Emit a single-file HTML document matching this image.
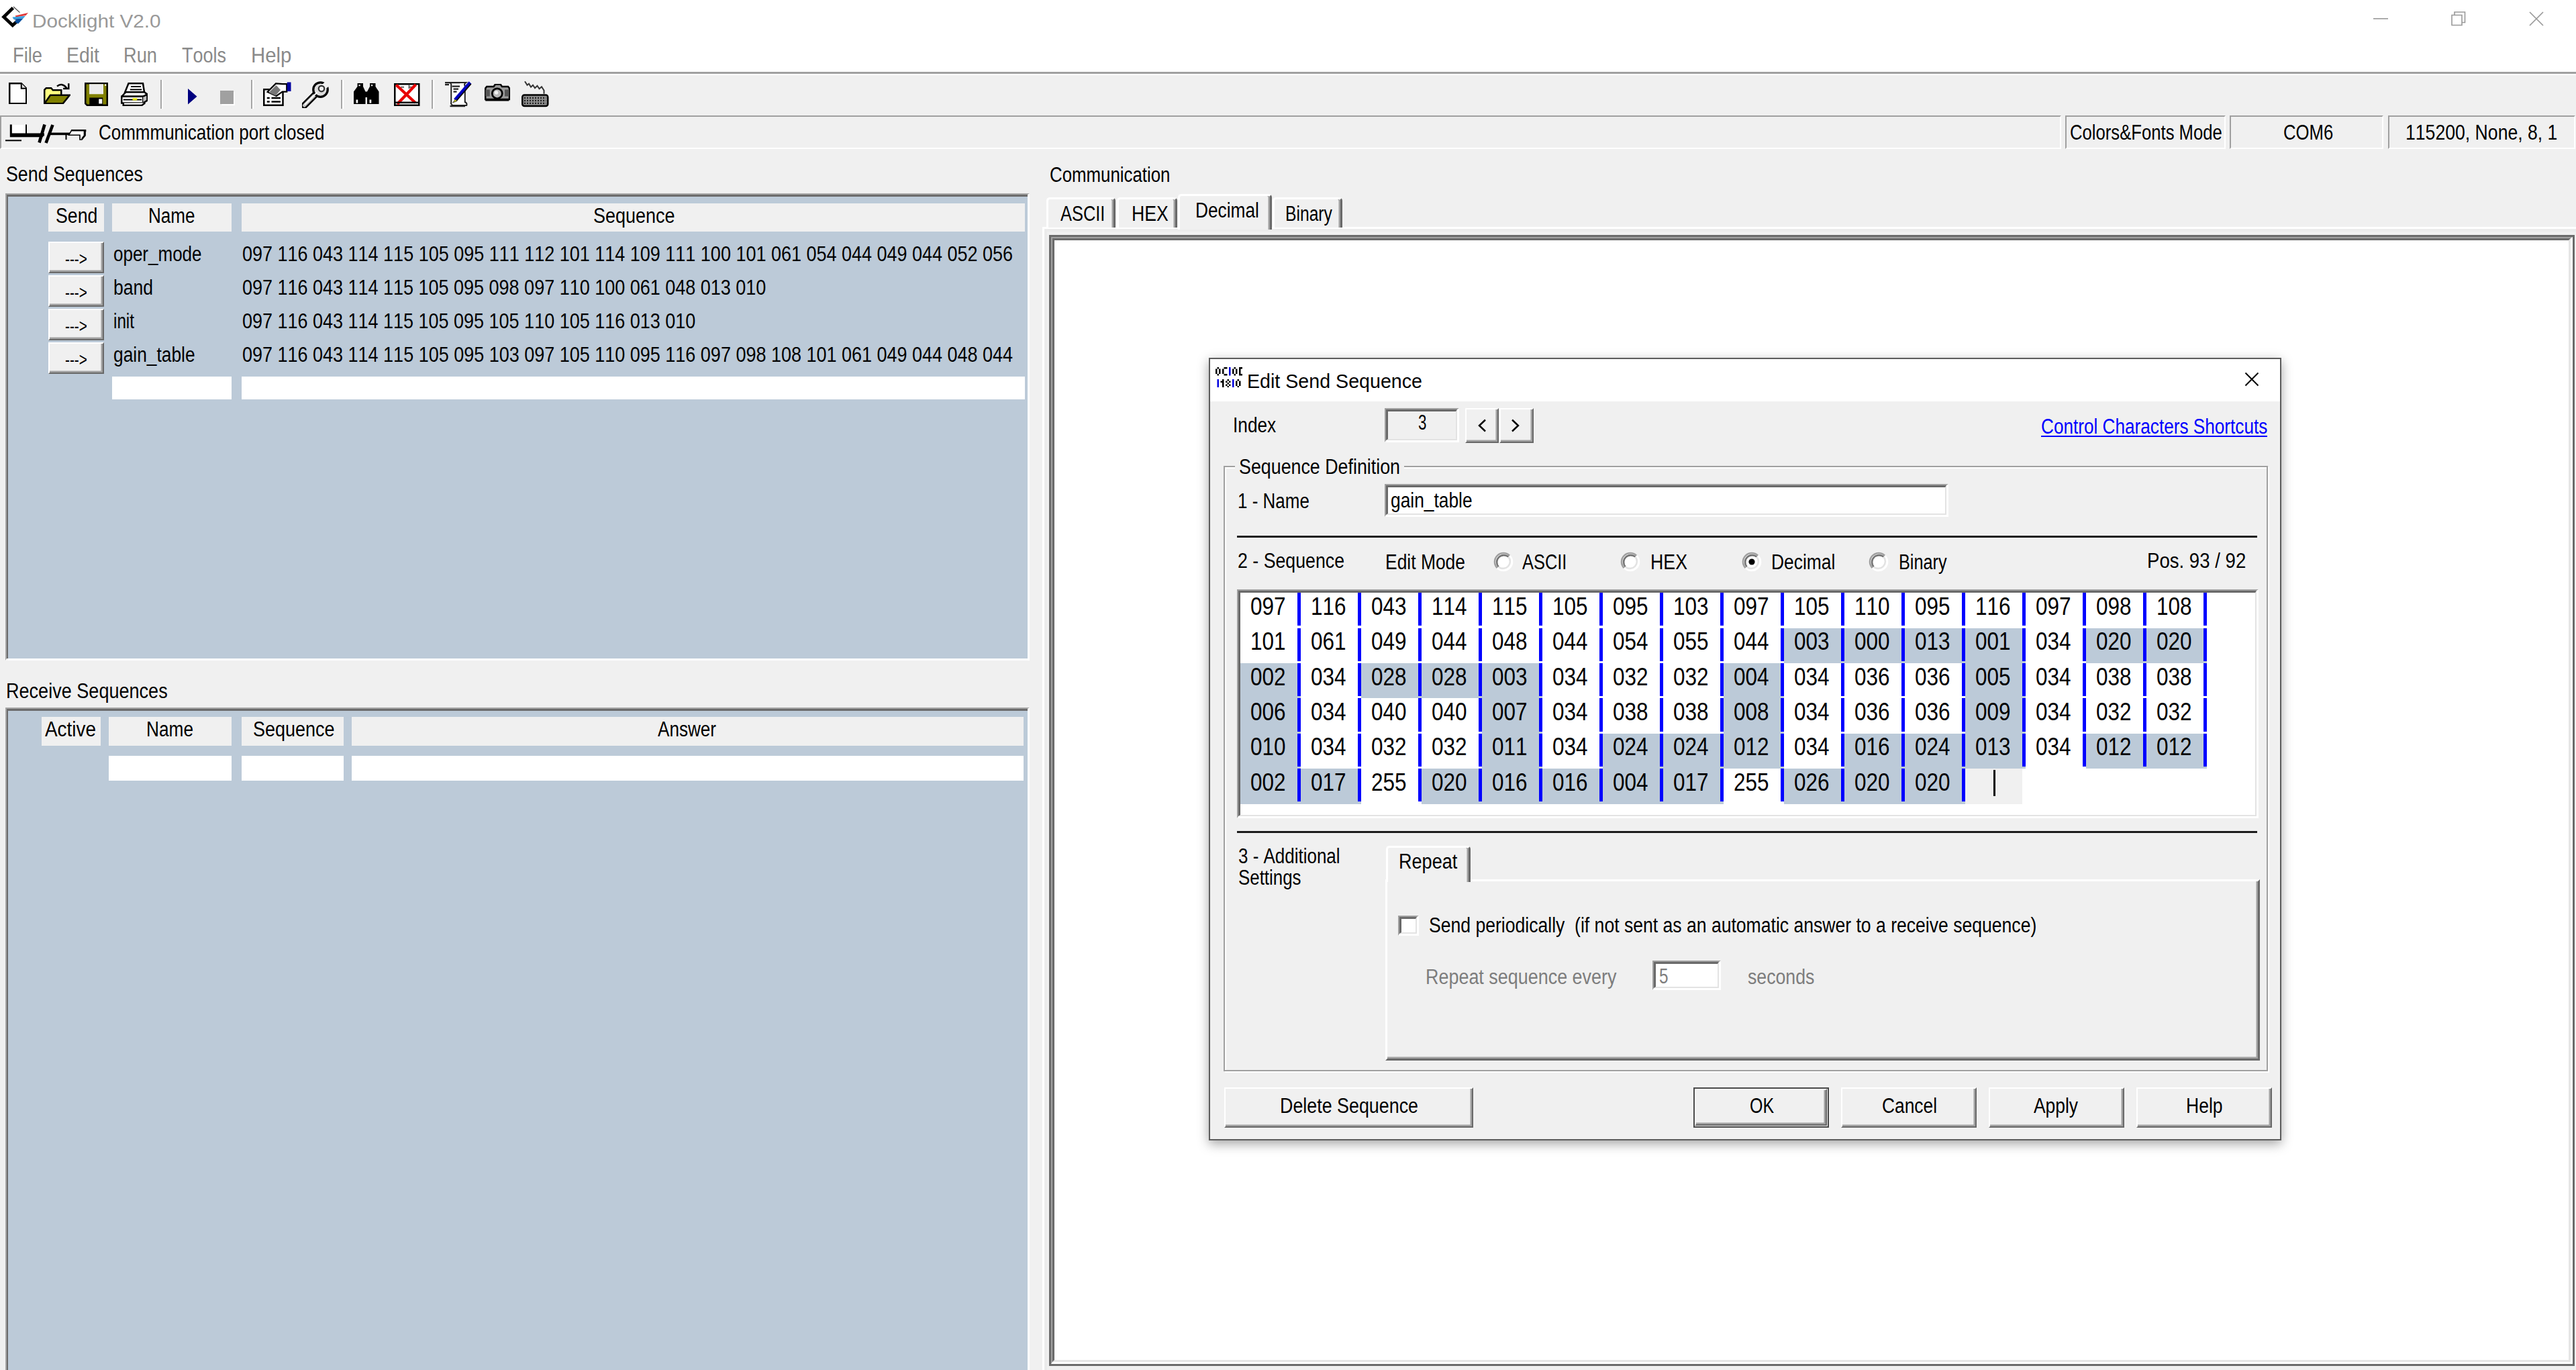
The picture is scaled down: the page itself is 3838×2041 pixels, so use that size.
<!DOCTYPE html>
<html><head><meta charset="utf-8"><title>Docklight V2.0</title>
<style>
html,body{margin:0;padding:0;}
body{width:3838px;height:2041px;overflow:hidden;background:#f0f0f0;position:relative;font-family:"Liberation Sans",sans-serif;}
div,span,svg{position:absolute;box-sizing:border-box;}
.t{white-space:pre;line-height:1;transform-origin:0 0;display:block;font-kerning:none;font-variant-ligatures:none;}
.sunk{border-style:solid;border-width:3px;border-color:#a0a0a0 #fff #fff #a0a0a0;}
.sunk2{border-style:solid;border-width:5px;border-color:#696969 #e3e3e3 #e3e3e3 #696969;box-shadow:-3px -3px 0 0 #a0a0a0, 3px 3px 0 0 #fff;}
.btn{background:#f0f0f0;border-style:solid;border-width:2.5px;border-color:#fff #696969 #696969 #fff;box-shadow:inset -2.5px -2.5px 0 0 #a0a0a0;}
</style></head><body>

<div style="left:0.0px;top:0.0px;width:3838.0px;height:107.0px;background:#fff;"></div>
<div style="left:0.0px;top:107.0px;width:3838.0px;height:3.0px;background:#a0a0a0;"></div>
<div style="left:0.0px;top:110.0px;width:3838.0px;height:2.0px;background:#fff;"></div>
<span class="t" style="left:47.5px;top:18.2px;font-size:27.5px;color:#999;transform:scale(1.0802,1.0000);">Docklight V2.0</span>
<span class="t" style="left:18.6px;top:67.3px;font-size:31.5px;color:#8a8a8a;transform:scale(0.8675,1.0000);">File</span>
<span class="t" style="left:98.6px;top:67.3px;font-size:31.5px;color:#8a8a8a;transform:scale(0.9016,1.0000);">Edit</span>
<span class="t" style="left:183.6px;top:67.3px;font-size:31.5px;color:#8a8a8a;transform:scale(0.8641,1.0000);">Run</span>
<span class="t" style="left:271.0px;top:67.3px;font-size:31.5px;color:#8a8a8a;transform:scale(0.8568,1.0000);">Tools</span>
<span class="t" style="left:373.7px;top:67.3px;font-size:31.5px;color:#8a8a8a;transform:scale(0.9313,1.0000);">Help</span>
<div style="left:238.5px;top:119.0px;width:2.0px;height:43.0px;background:#a6a6a6;"></div>
<div style="left:240.5px;top:119.0px;width:2.0px;height:43.0px;background:#fff;"></div>
<div style="left:373.5px;top:119.0px;width:2.0px;height:43.0px;background:#a6a6a6;"></div>
<div style="left:375.5px;top:119.0px;width:2.0px;height:43.0px;background:#fff;"></div>
<div style="left:507.5px;top:119.0px;width:2.0px;height:43.0px;background:#a6a6a6;"></div>
<div style="left:509.5px;top:119.0px;width:2.0px;height:43.0px;background:#fff;"></div>
<div style="left:642.5px;top:119.0px;width:2.0px;height:43.0px;background:#a6a6a6;"></div>
<div style="left:644.5px;top:119.0px;width:2.0px;height:43.0px;background:#fff;"></div>
<svg style="left:0.0px;top:5.0px;width:48px;height:40px" viewBox="0 0 48 40"><path d="M19.4 6.8 L5.6 20.2 L18.8 32.8 L25 27" stroke="#000" stroke-width="4.8" fill="none" stroke-linejoin="miter"/><path d="M20 5 L29.5 13.6" stroke="#444" stroke-width="1.2" fill="none"/><path d="M22.5 18.5 L42 14 L38.5 18 L24 20.5z" fill="#e03a3a"/><path d="M18.5 20.5 L38 18.8 L34.5 22.5 L20 23.5z" fill="#39a0e0"/><path d="M20 23.5 L34.5 22.5 L27 30.5 L22 27.5 L24 25z" fill="#0a4f9e"/></svg>
<svg style="left:3536.0px;top:27.0px;width:22px;height:2px" viewBox="0 0 22 2"><rect width="22" height="1.6" fill="#999"/></svg>
<svg style="left:3652.0px;top:17.0px;width:22px;height:22px" viewBox="0 0 22 22"><path d="M1 5.5h15v15h-15z M5 5.5v-4.5h15.5v15.5h-4.5" stroke="#999" stroke-width="1.6" fill="none"/></svg>
<svg style="left:3768.0px;top:17.0px;width:22px;height:22px" viewBox="0 0 22 22"><path d="M1 1L21 21M21 1L1 21" stroke="#999" stroke-width="1.7" fill="none"/></svg>
<svg style="left:12.5px;top:122.9px;width:27.5px;height:32.5px" viewBox="0 0 11 13"><path d="M.5 .5h7l3 3v9h-10z" fill="#fff" stroke="#000"/><path d="M7.5 .5v3h3" fill="#ddd" stroke="#000" stroke-width=".8"/></svg>
<svg style="left:65.0px;top:122.9px;width:40px;height:32.5px" viewBox="0 0 16 13"><path d="M.5 12.5v-8.2l1-1h3l1 1.2h5v3" fill="#ffff80" stroke="#000"/><path d="M.5 12.5l3.5-5h11.5l-4 5z" fill="#808000" stroke="#000"/><path d="M8 2.2q3.2-2.4 5.8 1.2" stroke="#000" fill="none" stroke-width="1"/><path d="M11.6 3.6h3.3v-3.1" stroke="#000" fill="none" stroke-width="1"/></svg>
<svg style="left:125.5px;top:123.4px;width:35px;height:35px" viewBox="0 0 14 14"><path d="M.5 .5h13v13h-12l-1-1z" fill="#808000" stroke="#000"/><rect x="2.8" y=".9" width="8.4" height="6" fill="#ebebeb"/><rect x="2.9" y="9" width="8" height="4.4" fill="#000"/><rect x="8.5" y="9.8" width="2" height="2.8" fill="#fff"/><rect x="12" y="1" width=".9" height=".9" fill="#fff"/></svg>
<svg style="left:180.3px;top:122.9px;width:40px;height:35px" viewBox="0 0 16 14"><path d="M4.6 .5h8.6l.8 5.2h-11.5z" fill="#fff" stroke="#000"/><path d="M6 2.4h6M5.5 4.2h7" stroke="#000" stroke-width=".8"/><path d="M.5 8.3l2.5-2.6h11l1.8 1.3-2.5 1.3z" fill="#fff" stroke="#000"/><path d="M.5 8.3h12.8v3.9h-12.8z" fill="#fff" stroke="#000"/><path d="M13.3 8.3l2.5-1.3v3.6l-2.5 1.6" fill="#c0c0c0" stroke="#000"/><path d="M1.5 12.2v1.4h11l2-1.5" fill="#fff" stroke="#000"/><path d="M1.5 10.2h11" stroke="#000" stroke-width=".8"/><rect x="7" y="9.3" width="2.7" height="1.3" fill="#e0e000"/></svg>
<svg style="left:280.0px;top:132.4px;width:13.5px;height:23.5px" viewBox="0 0 5.4 9.4"><path d="M0 0L5.4 4.7L0 9.4z" fill="#000080"/></svg>
<svg style="left:327.5px;top:135.4px;width:22.5px;height:22px" viewBox="0 0 9 8.8"><rect x="1" y="1" width="8" height="8" fill="#fff"/><rect width="8" height="8" fill="#a0a0a0"/></svg>
<svg style="left:392.0px;top:120.2px;width:42.5px;height:40px" viewBox="0 0 17 16"><rect x=".5" y="5.3" width="11.3" height="9.4" fill="#fff" stroke="#000"/><path d="M2.3 10.4h1.6M5 10.4h5.4M2.3 12.6h1.6M5 12.6h5.4" stroke="#000" stroke-width="1"/><path d="M2.6 6.8l5-5 4 .2 2.5 0v4.6l-2.6 0-3.6 2.6z" fill="#fff" stroke="#000" stroke-width=".9"/><path d="M3.4 7.2l4.4-4.4 2.6 2.8-3 3.4z" fill="#777"/><rect x="14.3" y="1" width="2.3" height="5.4" fill="#0000a0"/></svg>
<svg style="left:449.6px;top:120.6px;width:40px;height:40px" viewBox="0 0 16 16"><path d="M1.4 14.4l7.8-7.8" stroke="#000" stroke-width="4" fill="none" stroke-linecap="round"/><path d="M1.4 14.4l7.8-7.8" stroke="#c4c4c4" stroke-width="2" fill="none" stroke-linecap="round"/><circle cx="11" cy="5" r="4.3" fill="#dcdcdc" stroke="#000" stroke-width="1.3"/><path d="M1.6 14l7.4-7.4" stroke="#fff" stroke-width=".8"/><path d="M11.4 4.6l4.6-3.8" stroke="#f0f0f0" stroke-width="3.4"/><circle cx="11.6" cy="4.4" r="1.7" fill="#f0f0f0" stroke="#333" stroke-width=".9"/></svg>
<svg style="left:527.3px;top:123.6px;width:37.5px;height:31.5px" viewBox="0 0 15 12.6"><path d="M2.2 0h3.4v2l1.4 3v7.5h-7v-7.5l2.2-3z M9.6 0h3.4v2l2 3v7.5h-7v-7.5l1.6-3z M6.5 5h2v3.4h-2z" fill="#000"/><rect x="1.4" y="9.8" width="1.1" height="2" fill="#fff"/><rect x="9.4" y="9.8" width="1.1" height="2" fill="#fff"/><rect x="3" y=".8" width=".9" height=".9" fill="#ddd"/><rect x="10.4" y=".8" width=".9" height=".9" fill="#ddd"/></svg>
<svg style="left:587.0px;top:123.6px;width:38.5px;height:34px" viewBox="0 0 15.4 13.6"><rect x=".5" y=".5" width="14.4" height="12.6" fill="#fff" stroke="#000"/><path d="M4 2.3h2M9 .8v2.4M9 2.3h3" stroke="#666" stroke-width=".8"/><path d="M1.3 1l11.4 10.6M13 .8l-11 11.6" stroke="#e80000" stroke-width="1.7" fill="none"/><path d="M.5 11.5h14.4" stroke="#000"/></svg>
<svg style="left:662.0px;top:120.0px;width:42.5px;height:40px" viewBox="0 0 17 16"><path d="M3.5 1.2h9.4q-1.4 .9-.6 2v9.6q1.4 .6 1 2h-8.2q-1.4-.6-1-2v-10.6z" fill="#fff" stroke="#222" stroke-width=".8"/><path d="M.4 1.2h9M.4 2.4h2.4M4.6 3.4h4.6M5.4 5h3M5.4 6.6h2M3.4 15.2h9" stroke="#222" stroke-width=".9"/><path d="M15.4 1.2l-9 10.4" stroke="#0000c0" stroke-width="2" /><path d="M15.9 2l-8.6 10" stroke="#000" stroke-width=".7"/><path d="M6.6 11.2l-1.6 2 2.6-1z" fill="#d8d800" stroke="#444" stroke-width=".4"/></svg>
<svg style="left:722.0px;top:125.4px;width:37.5px;height:27.5px" viewBox="0 0 15 11"><path d="M5.4 1.6l1-1.4h3l1 1.4h3.6l.8 1v6.6h-14.3v-6.6l.8-1z" fill="#9a9a9a" stroke="#000" stroke-width="1"/><rect x=".5" y="3.4" width="2.6" height="4" fill="#555"/><rect x="12" y="3.4" width="2.6" height="4" fill="#555"/><circle cx="7.5" cy="5.7" r="3" fill="#b8b8b8" stroke="#000" stroke-width="1.1"/><circle cx="7" cy="5.2" r="1.1" fill="#f2f2f2"/><path d="M.5 9.6h14" stroke="#000" stroke-width="1.2"/></svg>
<svg style="left:777.3px;top:120.0px;width:42.5px;height:40px" viewBox="0 0 17 16"><path d="M2 .5l1.4 2.2 1-.8 1.2 2 1.2-1.2 1.2 1.8 1.4-1.4 1.2 1.8 1.4-1.2 1.4 2.2v2" stroke="#333" stroke-width=".8" fill="none"/><rect x=".5" y="8.6" width="15.2" height="6.6" rx="1.2" fill="#8c8c8c" stroke="#000" stroke-width="1"/><path d="M1.6 10.3h13M1.6 11.9h13M1.6 13.5h13" stroke="#222" stroke-width=".9" stroke-dasharray=".8 .8"/></svg>
<div style="left:0.0px;top:172.3px;width:3071.0px;height:49.7px;border-style:solid;border-width:2.5px;border-color:#a0a0a0 #fff #fff #a0a0a0;"></div>
<div style="left:3077.0px;top:172.3px;width:239.0px;height:49.7px;border-style:solid;border-width:2.5px;border-color:#a0a0a0 #fff #fff #a0a0a0;"></div>
<div style="left:3322.0px;top:172.3px;width:229.0px;height:49.7px;border-style:solid;border-width:2.5px;border-color:#a0a0a0 #fff #fff #a0a0a0;"></div>
<div style="left:3558.0px;top:172.3px;width:279.0px;height:49.7px;border-style:solid;border-width:2.5px;border-color:#a0a0a0 #fff #fff #a0a0a0;"></div>
<span class="t" style="left:146.6px;top:182.3px;font-size:31px;color:#000;transform:scale(0.8380,1.0000);">Commmunication port closed</span>
<span class="t" style="left:3084.0px;top:182.3px;font-size:31px;color:#000;transform:scale(0.8280,1.0000);">Colors&amp;Fonts Mode</span>
<span class="t" style="left:3401.8px;top:182.3px;font-size:31px;color:#000;transform:scale(0.8288,1.0000);">COM6</span>
<span class="t" style="left:3584.0px;top:182.3px;font-size:31px;color:#000;transform:scale(0.8586,1.0000);">115200, None, 8, 1</span>
<svg style="left:5.0px;top:180.0px;width:130px;height:36px" viewBox="0 0 130 36"><rect x="12" y="6" width="21" height="14" fill="#fff"/><path d="M11.3 5.4v17.4h48" stroke="#000" stroke-width="3" fill="none"/><path d="M34 5.4v16" stroke="#000" stroke-width="2"/><path d="M11 20.5h50" stroke="#000" stroke-width="4.2"/><path d="M3 29.3h24" stroke="#000" stroke-width="2"/><path d="M61.5 5.5l-8 27" stroke="#000" stroke-width="4.6"/><path d="M73.5 6l-10 27" stroke="#000" stroke-width="4.6"/><path d="M70 19.4h30" stroke="#000" stroke-width="3.6"/><path d="M93.5 20v8" stroke="#000" stroke-width="2"/><path d="M97.5 21.3l4-7h20.5v7.5l-5 6.2h-3v-6.7z" fill="#fff" stroke="#000" stroke-width="1.6"/><path d="M101 14.3h21v2" stroke="#000" stroke-width="2.6" fill="none"/><path d="M121 14v8l-4 5" stroke="#000" stroke-width="2.6" fill="none"/></svg>
<span class="t" style="left:9.0px;top:244.4px;font-size:31px;color:#000;transform:scale(0.8639,1.0000);">Send Sequences</span>
<div style="left:8.0px;top:288.3px;width:1526.0px;height:695.7px;border-style:solid;border-width:2px 3px 3px 2px;border-color:#a6a6a6 #fff #fff #a6a6a6;"></div>
<div style="left:10.0px;top:290.3px;width:1521.0px;height:690.7px;background:#bccad8;border-style:solid;border-width:3px 0 0 2px;border-color:#6b6b6b;"></div>
<div style="left:72.0px;top:303.0px;width:82.7px;height:42.0px;background:#f0f0f0;"></div>
<div style="left:167.0px;top:303.0px;width:177.7px;height:42.0px;background:#f0f0f0;"></div>
<div style="left:359.6px;top:303.0px;width:1167.4px;height:42.0px;background:#f0f0f0;"></div>
<span class="t" style="left:82.6px;top:306.3px;font-size:31px;color:#000;transform:scale(0.8623,1.0000);">Send</span>
<span class="t" style="left:220.5px;top:306.3px;font-size:31px;color:#000;transform:scale(0.8408,1.0000);">Name</span>
<span class="t" style="left:884.0px;top:306.3px;font-size:31px;color:#000;transform:scale(0.8704,1.0000);">Sequence</span>
<div class="btn" style="left:72.0px;top:360.0px;width:83.0px;height:46.5px;"></div>
<span class="t" style="left:97.0px;top:372.3px;font-size:28px;color:#000;transform:scale(0.7440,1.0000);">---&gt;</span>
<span class="t" style="left:169.0px;top:362.5px;font-size:31px;color:#000;transform:scale(0.8386,1.0000);">oper_mode</span>
<span class="t" style="left:361.0px;top:362.5px;font-size:31px;color:#000;transform:scale(0.8706,1.0000);">097 116 043 114 115 105 095 111 112 101 114 109 111 100 101 061 054 044 049 044 052 056</span>
<div class="btn" style="left:72.0px;top:410.0px;width:83.0px;height:46.5px;"></div>
<span class="t" style="left:97.0px;top:422.3px;font-size:28px;color:#000;transform:scale(0.7440,1.0000);">---&gt;</span>
<span class="t" style="left:169.0px;top:412.5px;font-size:31px;color:#000;transform:scale(0.8560,1.0000);">band</span>
<span class="t" style="left:361.0px;top:412.5px;font-size:31px;color:#000;transform:scale(0.8704,1.0000);">097 116 043 114 115 105 095 098 097 110 100 061 048 013 010</span>
<div class="btn" style="left:72.0px;top:460.0px;width:83.0px;height:46.5px;"></div>
<span class="t" style="left:97.0px;top:472.3px;font-size:28px;color:#000;transform:scale(0.7440,1.0000);">---&gt;</span>
<span class="t" style="left:169.0px;top:462.5px;font-size:31px;color:#000;transform:scale(0.7809,1.0000);">init</span>
<span class="t" style="left:361.0px;top:462.5px;font-size:31px;color:#000;transform:scale(0.8704,1.0000);">097 116 043 114 115 105 095 105 110 105 116 013 010</span>
<div class="btn" style="left:72.0px;top:510.0px;width:83.0px;height:46.5px;"></div>
<span class="t" style="left:97.0px;top:522.3px;font-size:28px;color:#000;transform:scale(0.7440,1.0000);">---&gt;</span>
<span class="t" style="left:169.0px;top:512.5px;font-size:31px;color:#000;transform:scale(0.8494,1.0000);">gain_table</span>
<span class="t" style="left:361.0px;top:512.5px;font-size:31px;color:#000;transform:scale(0.8706,1.0000);">097 116 043 114 115 105 095 103 097 105 110 095 116 097 098 108 101 061 049 044 048 044</span>
<div style="left:167.0px;top:561.0px;width:177.7px;height:34.0px;background:#fff;"></div>
<div style="left:359.6px;top:561.0px;width:1167.4px;height:34.0px;background:#fff;"></div>
<span class="t" style="left:9.3px;top:1013.5px;font-size:31px;color:#000;transform:scale(0.8729,1.0000);">Receive Sequences</span>
<div style="left:8.0px;top:1053.5px;width:1526.0px;height:1006.5px;border-style:solid;border-width:2px 3px 3px 2px;border-color:#a6a6a6 #fff #fff #a6a6a6;"></div>
<div style="left:10.0px;top:1055.5px;width:1521.0px;height:1001.5px;background:#bccad8;border-style:solid;border-width:3px 0 0 2px;border-color:#6b6b6b;"></div>
<div style="left:62.0px;top:1068.0px;width:88.0px;height:42.5px;background:#f0f0f0;"></div>
<div style="left:162.0px;top:1068.0px;width:182.7px;height:42.5px;background:#f0f0f0;"></div>
<div style="left:359.6px;top:1068.0px;width:152.8px;height:42.5px;background:#f0f0f0;"></div>
<div style="left:524.0px;top:1068.0px;width:1001.0px;height:42.5px;background:#f0f0f0;"></div>
<span class="t" style="left:67.0px;top:1070.8px;font-size:31px;color:#000;transform:scale(0.9007,1.0000);">Active</span>
<span class="t" style="left:218.0px;top:1070.8px;font-size:31px;color:#000;transform:scale(0.8469,1.0000);">Name</span>
<span class="t" style="left:376.5px;top:1070.8px;font-size:31px;color:#000;transform:scale(0.8704,1.0000);">Sequence</span>
<span class="t" style="left:980.0px;top:1070.8px;font-size:31px;color:#000;transform:scale(0.8411,1.0000);">Answer</span>
<div style="left:162.0px;top:1126.0px;width:182.7px;height:37.0px;background:#fff;"></div>
<div style="left:359.6px;top:1126.0px;width:152.8px;height:37.0px;background:#fff;"></div>
<div style="left:524.0px;top:1126.0px;width:1001.0px;height:37.0px;background:#fff;"></div>
<span class="t" style="left:1563.6px;top:244.5px;font-size:31px;color:#000;transform:scale(0.8331,1.0000);">Communication</span>
<div style="left:1553.0px;top:338.0px;width:2289.0px;height:1712.0px;border-style:solid;border-width:3px 0 0 3px;border-color:#fff;"></div>
<div style="left:1556.0px;top:341.0px;width:4.0px;height:1700.0px;background:#ebebeb;"></div>
<div style="left:1556.0px;top:341.0px;width:2282.0px;height:4.0px;background:#ebebeb;"></div>
<div style="left:1562.5px;top:350.4px;width:2273.0px;height:1684.8px;border:3px solid #6b6b6b;"></div>
<div style="left:1565.5px;top:353.4px;width:2267.0px;height:1678.8px;border-style:solid;border-width:2px 3px 3px 2px;border-color:#a0a0a0 #fff #fff #a0a0a0;"></div>
<div style="left:1567.5px;top:355.4px;width:2262.0px;height:1673.8px;background:#fff;border-style:solid;border-width:3px;border-color:#6b6b6b #e6e6e6 #e6e6e6 #6b6b6b;"></div>
<div style="left:1558.5px;top:293.5px;width:103.9px;height:45.5px;background:#f0f0f0;border-style:solid;border-width:3px 3px 0 3px;border-color:#fff #696969 #fff #fff;border-radius:5px 5px 0 0;box-shadow:inset -2.5px 0 0 0 #a0a0a0;"></div>
<div style="left:1664.0px;top:293.5px;width:90.0px;height:45.5px;background:#f0f0f0;border-style:solid;border-width:3px 3px 0 3px;border-color:#fff #696969 #fff #fff;border-radius:5px 5px 0 0;box-shadow:inset -2.5px 0 0 0 #a0a0a0;"></div>
<div style="left:1896.0px;top:293.5px;width:104.0px;height:45.5px;background:#f0f0f0;border-style:solid;border-width:3px 3px 0 3px;border-color:#fff #696969 #fff #fff;border-radius:5px 5px 0 0;box-shadow:inset -2.5px 0 0 0 #a0a0a0;"></div>
<div style="left:1755.0px;top:288.5px;width:140.0px;height:53.5px;background:#f0f0f0;border-style:solid;border-width:3px 3px 0 3px;border-color:#fff #696969 #fff #fff;border-radius:5px 5px 0 0;box-shadow:inset -2.5px 0 0 0 #a0a0a0;"></div>
<span class="t" style="left:1579.5px;top:303.1px;font-size:31px;color:#000;transform:scale(0.8206,1.0000);">ASCII</span>
<span class="t" style="left:1686.0px;top:303.1px;font-size:31px;color:#000;transform:scale(0.8590,1.0000);">HEX</span>
<span class="t" style="left:1781.0px;top:297.8px;font-size:31px;color:#000;transform:scale(0.8472,1.0000);">Decimal</span>
<span class="t" style="left:1914.6px;top:303.1px;font-size:31px;color:#000;transform:scale(0.7955,1.0000);">Binary</span>
<div style="left:1801.0px;top:533.0px;width:1598.0px;height:1166.0px;background:#f0f0f0;border:2px solid #5c5c5c;box-shadow:0 5px 16px 0 rgba(0,0,0,0.36);"></div>
<div style="left:1803.0px;top:535.0px;width:1594.0px;height:62.5px;background:#fff;"></div>
<span class="t" style="left:1857.6px;top:553.1px;font-size:30px;color:#000;transform:scale(0.9539,1.0000);">Edit Send Sequence</span>
<svg style="left:3343px;top:553px;width:24px;height:24px" viewBox="0 0 24 24"><path d="M2.5 2.5 L21.5 21.5 M21.5 2.5 L2.5 21.5" stroke="#000" stroke-width="2" fill="none"/></svg>
<svg style="left:1811.0px;top:547.2px;width:40px;height:12.5px" viewBox="0 0 16 5"><path d="M1 0h1v1h-1zM5 0h2v1h-2zM11 0h1v1h-1zM14 0h2v1h-2zM0 1h1v1h-1zM2 1h1v1h-1zM4 1h1v1h-1zM10 1h1v1h-1zM12 1h1v1h-1zM14 1h1v1h-1zM0 2h1v1h-1zM2 2h1v1h-1zM4 2h1v1h-1zM10 2h1v1h-1zM12 2h1v1h-1zM14 2h1v1h-1zM0 3h1v1h-1zM2 3h1v1h-1zM4 3h1v1h-1zM10 3h1v1h-1zM12 3h1v1h-1zM14 3h1v1h-1zM1 4h1v1h-1zM5 4h2v1h-2zM11 4h1v1h-1zM14 4h2v1h-2z" fill="#000"/><path d="M8 0h1v1h-1zM8 1h1v1h-1zM8 2h1v1h-1zM8 3h1v1h-1zM8 4h1v1h-1z" fill="#0000e0"/></svg>
<svg style="left:1811.0px;top:564.8px;width:40px;height:12.5px" viewBox="0 0 16 5"><path d="M4 0h1v1h-1zM7 0h1v1h-1zM13 0h1v1h-1zM3 1h2v1h-2zM6 1h1v1h-1zM8 1h1v1h-1zM12 1h1v1h-1zM14 1h1v1h-1zM4 2h1v1h-1zM7 2h1v1h-1zM12 2h1v1h-1zM14 2h1v1h-1zM4 3h1v1h-1zM6 3h1v1h-1zM8 3h1v1h-1zM12 3h1v1h-1zM14 3h1v1h-1zM4 4h1v1h-1zM7 4h1v1h-1zM13 4h1v1h-1z" fill="#000"/><path d="M1 0h1v1h-1zM10 0h1v1h-1zM1 1h1v1h-1zM10 1h1v1h-1zM1 2h1v1h-1zM10 2h1v1h-1zM1 3h1v1h-1zM10 3h1v1h-1zM1 4h1v1h-1zM10 4h1v1h-1z" fill="#0000e0"/></svg>
<span class="t" style="left:1836.8px;top:617.5px;font-size:31px;color:#000;transform:scale(0.8466,1.0000);">Index</span>
<div class="btn" style="left:2183.0px;top:608.2px;width:50.0px;height:51.8px;"></div>
<div class="btn" style="left:2233.5px;top:608.2px;width:51.8px;height:51.8px;"></div>
<svg style="left:2201px;top:623px;width:14px;height:22px" viewBox="0 0 14 22"><path d="M12 2.5 L3 11 L12 19.5" stroke="#000" stroke-width="2.5" fill="none"/></svg>
<svg style="left:2250.5px;top:623px;width:14px;height:22px" viewBox="0 0 14 22"><path d="M2 2.5 L11 11 L2 19.5" stroke="#000" stroke-width="2.5" fill="none"/></svg>
<span class="t" style="left:3040.7px;top:619.7px;font-size:31px;color:#0000ff;transform:scale(0.8438,1.0000);">Control Characters Shortcuts</span>
<div style="left:3040.7px;top:648.5px;width:337.3px;height:2.5px;background:#0000ff;"></div>
<div style="left:1825.0px;top:695.5px;width:1555.5px;height:902.5px;border:2.5px solid #fff;"></div>
<div style="left:1823.0px;top:693.5px;width:1555.5px;height:902.5px;border:2.5px solid #a0a0a0;"></div>
<div style="left:1840.0px;top:680.0px;width:252.0px;height:32.0px;background:#f0f0f0;"></div>
<span class="t" style="left:1846.0px;top:679.6px;font-size:31px;color:#000;transform:scale(0.8650,1.0000);">Sequence Definition</span>
<span class="t" style="left:1844.0px;top:730.8px;font-size:31px;color:#000;transform:scale(0.8380,1.0000);">1 - Name</span>
<div style="left:2063.4px;top:721.4px;width:839.4px;height:48.9px;border-style:solid;border-width:2px 3px 3px 2px;border-color:#a0a0a0 #fff #fff #a0a0a0;"></div>
<div style="left:2065.4px;top:723.4px;width:834.4px;height:43.9px;background:#fff;border-style:solid;border-width:3px 2px 2px 3px;border-color:#696969 #e3e3e3 #e3e3e3 #696969;"></div>
<div style="left:2063.4px;top:608.2px;width:110.2px;height:51.1px;border-style:solid;border-width:2px 3px 3px 2px;border-color:#a0a0a0 #fff #fff #a0a0a0;"></div>
<div style="left:2065.4px;top:610.2px;width:105.2px;height:46.1px;background:#f0f0f0;border-style:solid;border-width:3px 2px 2px 3px;border-color:#696969 #e3e3e3 #e3e3e3 #696969;"></div>
<span class="t" style="left:2113.2px;top:614.4px;font-size:31px;color:#000;transform:scale(0.7207,1.0000);">3</span>
<span class="t" style="left:2072.0px;top:729.8px;font-size:31px;color:#000;transform:scale(0.8494,1.0000);">gain_table</span>
<div style="left:1843.0px;top:798.0px;width:1520.0px;height:3.0px;background:#1c1c1c;"></div>
<span class="t" style="left:1844.0px;top:819.8px;font-size:31px;color:#000;transform:scale(0.8624,1.0000);">2 - Sequence</span>
<span class="t" style="left:2064.0px;top:822.4px;font-size:31px;color:#000;transform:scale(0.8528,1.0000);">Edit Mode</span>
<svg style="left:2223.6px;top:821.4px;width:32px;height:32px" viewBox="0 0 32 32"><circle cx="16" cy="16" r="12" fill="#fff"/><path d="M6.8 25.2 A13 13 0 0 1 25.2 6.8" stroke="#a0a0a0" stroke-width="2.6" fill="none"/><path d="M8.6 23.4 A10.5 10.5 0 0 1 23.4 8.6" stroke="#747474" stroke-width="2.6" fill="none"/><path d="M25.2 6.8 A13 13 0 0 1 6.8 25.2" stroke="#fff" stroke-width="2.6" fill="none"/><path d="M23.4 8.6 A10.5 10.5 0 0 1 8.6 23.4" stroke="#e3e3e3" stroke-width="2.6" fill="none"/></svg>
<svg style="left:2413px;top:821.4px;width:32px;height:32px" viewBox="0 0 32 32"><circle cx="16" cy="16" r="12" fill="#fff"/><path d="M6.8 25.2 A13 13 0 0 1 25.2 6.8" stroke="#a0a0a0" stroke-width="2.6" fill="none"/><path d="M8.6 23.4 A10.5 10.5 0 0 1 23.4 8.6" stroke="#747474" stroke-width="2.6" fill="none"/><path d="M25.2 6.8 A13 13 0 0 1 6.8 25.2" stroke="#fff" stroke-width="2.6" fill="none"/><path d="M23.4 8.6 A10.5 10.5 0 0 1 8.6 23.4" stroke="#e3e3e3" stroke-width="2.6" fill="none"/></svg>
<svg style="left:2594px;top:821.4px;width:32px;height:32px" viewBox="0 0 32 32"><circle cx="16" cy="16" r="12" fill="#fff"/><path d="M6.8 25.2 A13 13 0 0 1 25.2 6.8" stroke="#a0a0a0" stroke-width="2.6" fill="none"/><path d="M8.6 23.4 A10.5 10.5 0 0 1 23.4 8.6" stroke="#747474" stroke-width="2.6" fill="none"/><path d="M25.2 6.8 A13 13 0 0 1 6.8 25.2" stroke="#fff" stroke-width="2.6" fill="none"/><path d="M23.4 8.6 A10.5 10.5 0 0 1 8.6 23.4" stroke="#e3e3e3" stroke-width="2.6" fill="none"/><circle cx="16" cy="16" r="4.6" fill="#000"/></svg>
<svg style="left:2783px;top:821.4px;width:32px;height:32px" viewBox="0 0 32 32"><circle cx="16" cy="16" r="12" fill="#fff"/><path d="M6.8 25.2 A13 13 0 0 1 25.2 6.8" stroke="#a0a0a0" stroke-width="2.6" fill="none"/><path d="M8.6 23.4 A10.5 10.5 0 0 1 23.4 8.6" stroke="#747474" stroke-width="2.6" fill="none"/><path d="M25.2 6.8 A13 13 0 0 1 6.8 25.2" stroke="#fff" stroke-width="2.6" fill="none"/><path d="M23.4 8.6 A10.5 10.5 0 0 1 8.6 23.4" stroke="#e3e3e3" stroke-width="2.6" fill="none"/></svg>
<span class="t" style="left:2267.6px;top:822.4px;font-size:31px;color:#000;transform:scale(0.8194,1.0000);">ASCII</span>
<span class="t" style="left:2458.6px;top:822.4px;font-size:31px;color:#000;transform:scale(0.8621,1.0000);">HEX</span>
<span class="t" style="left:2638.7px;top:822.4px;font-size:31px;color:#000;transform:scale(0.8516,1.0000);">Decimal</span>
<span class="t" style="left:2829.4px;top:822.4px;font-size:31px;color:#000;transform:scale(0.8148,1.0000);">Binary</span>
<span class="t" style="left:3198.8px;top:819.8px;font-size:31px;color:#000;transform:scale(0.8899,1.0000);">Pos. 93 / 92</span>
<div style="left:1843.0px;top:878.4px;width:1521.5px;height:340.6px;border-style:solid;border-width:2px 3px 3px 2px;border-color:#a0a0a0 #fff #fff #a0a0a0;"></div>
<div style="left:1845.0px;top:880.4px;width:1516.5px;height:335.6px;background:#fff;border-style:solid;border-width:3px 2px 2px 3px;border-color:#696969 #e3e3e3 #e3e3e3 #696969;"></div>
<div style="left:1933.0px;top:883.2px;width:5.0px;height:49.2px;background:#0000ff;"></div>
<div style="left:2023.0px;top:883.2px;width:5.0px;height:49.2px;background:#0000ff;"></div>
<div style="left:2113.0px;top:883.2px;width:5.0px;height:49.2px;background:#0000ff;"></div>
<div style="left:2203.0px;top:883.2px;width:5.0px;height:49.2px;background:#0000ff;"></div>
<div style="left:2293.0px;top:883.2px;width:5.0px;height:49.2px;background:#0000ff;"></div>
<div style="left:2383.0px;top:883.2px;width:5.0px;height:49.2px;background:#0000ff;"></div>
<div style="left:2473.0px;top:883.2px;width:5.0px;height:49.2px;background:#0000ff;"></div>
<div style="left:2563.0px;top:883.2px;width:5.0px;height:49.2px;background:#0000ff;"></div>
<div style="left:2653.0px;top:883.2px;width:5.0px;height:49.2px;background:#0000ff;"></div>
<div style="left:2743.0px;top:883.2px;width:5.0px;height:49.2px;background:#0000ff;"></div>
<div style="left:2833.0px;top:883.2px;width:5.0px;height:49.2px;background:#0000ff;"></div>
<div style="left:2923.0px;top:883.2px;width:5.0px;height:49.2px;background:#0000ff;"></div>
<div style="left:3013.0px;top:883.2px;width:5.0px;height:49.2px;background:#0000ff;"></div>
<div style="left:3103.0px;top:883.2px;width:5.0px;height:49.2px;background:#0000ff;"></div>
<div style="left:3193.0px;top:883.2px;width:5.0px;height:49.2px;background:#0000ff;"></div>
<div style="left:3283.0px;top:883.2px;width:5.0px;height:49.2px;background:#0000ff;"></div>
<div style="left:1933.0px;top:935.6px;width:5.0px;height:49.2px;background:#0000ff;"></div>
<div style="left:2023.0px;top:935.6px;width:5.0px;height:49.2px;background:#0000ff;"></div>
<div style="left:2113.0px;top:935.6px;width:5.0px;height:49.2px;background:#0000ff;"></div>
<div style="left:2203.0px;top:935.6px;width:5.0px;height:49.2px;background:#0000ff;"></div>
<div style="left:2293.0px;top:935.6px;width:5.0px;height:49.2px;background:#0000ff;"></div>
<div style="left:2383.0px;top:935.6px;width:5.0px;height:49.2px;background:#0000ff;"></div>
<div style="left:2473.0px;top:935.6px;width:5.0px;height:49.2px;background:#0000ff;"></div>
<div style="left:2563.0px;top:935.6px;width:5.0px;height:49.2px;background:#0000ff;"></div>
<div style="left:2653.0px;top:935.6px;width:5.0px;height:49.2px;background:#0000ff;"></div>
<div style="left:2658.0px;top:935.6px;width:90.0px;height:52.4px;background:#bccad8;"></div>
<div style="left:2743.0px;top:935.6px;width:5.0px;height:49.2px;background:#0000ff;"></div>
<div style="left:2748.0px;top:935.6px;width:90.0px;height:52.4px;background:#bccad8;"></div>
<div style="left:2833.0px;top:935.6px;width:5.0px;height:49.2px;background:#0000ff;"></div>
<div style="left:2838.0px;top:935.6px;width:90.0px;height:52.4px;background:#bccad8;"></div>
<div style="left:2923.0px;top:935.6px;width:5.0px;height:49.2px;background:#0000ff;"></div>
<div style="left:2928.0px;top:935.6px;width:90.0px;height:52.4px;background:#bccad8;"></div>
<div style="left:3013.0px;top:935.6px;width:5.0px;height:49.2px;background:#0000ff;"></div>
<div style="left:3103.0px;top:935.6px;width:5.0px;height:49.2px;background:#0000ff;"></div>
<div style="left:3108.0px;top:935.6px;width:90.0px;height:52.4px;background:#bccad8;"></div>
<div style="left:3193.0px;top:935.6px;width:5.0px;height:49.2px;background:#0000ff;"></div>
<div style="left:3198.0px;top:935.6px;width:90.0px;height:52.4px;background:#bccad8;"></div>
<div style="left:3283.0px;top:935.6px;width:5.0px;height:49.2px;background:#0000ff;"></div>
<div style="left:1848.0px;top:988.0px;width:90.0px;height:52.4px;background:#bccad8;"></div>
<div style="left:1933.0px;top:988.0px;width:5.0px;height:49.2px;background:#0000ff;"></div>
<div style="left:2023.0px;top:988.0px;width:5.0px;height:49.2px;background:#0000ff;"></div>
<div style="left:2028.0px;top:988.0px;width:90.0px;height:52.4px;background:#bccad8;"></div>
<div style="left:2113.0px;top:988.0px;width:5.0px;height:49.2px;background:#0000ff;"></div>
<div style="left:2118.0px;top:988.0px;width:90.0px;height:52.4px;background:#bccad8;"></div>
<div style="left:2203.0px;top:988.0px;width:5.0px;height:49.2px;background:#0000ff;"></div>
<div style="left:2208.0px;top:988.0px;width:90.0px;height:52.4px;background:#bccad8;"></div>
<div style="left:2293.0px;top:988.0px;width:5.0px;height:49.2px;background:#0000ff;"></div>
<div style="left:2383.0px;top:988.0px;width:5.0px;height:49.2px;background:#0000ff;"></div>
<div style="left:2473.0px;top:988.0px;width:5.0px;height:49.2px;background:#0000ff;"></div>
<div style="left:2563.0px;top:988.0px;width:5.0px;height:49.2px;background:#0000ff;"></div>
<div style="left:2568.0px;top:988.0px;width:90.0px;height:52.4px;background:#bccad8;"></div>
<div style="left:2653.0px;top:988.0px;width:5.0px;height:49.2px;background:#0000ff;"></div>
<div style="left:2743.0px;top:988.0px;width:5.0px;height:49.2px;background:#0000ff;"></div>
<div style="left:2833.0px;top:988.0px;width:5.0px;height:49.2px;background:#0000ff;"></div>
<div style="left:2923.0px;top:988.0px;width:5.0px;height:49.2px;background:#0000ff;"></div>
<div style="left:2928.0px;top:988.0px;width:90.0px;height:52.4px;background:#bccad8;"></div>
<div style="left:3013.0px;top:988.0px;width:5.0px;height:49.2px;background:#0000ff;"></div>
<div style="left:3103.0px;top:988.0px;width:5.0px;height:49.2px;background:#0000ff;"></div>
<div style="left:3193.0px;top:988.0px;width:5.0px;height:49.2px;background:#0000ff;"></div>
<div style="left:3283.0px;top:988.0px;width:5.0px;height:49.2px;background:#0000ff;"></div>
<div style="left:1848.0px;top:1040.4px;width:90.0px;height:52.4px;background:#bccad8;"></div>
<div style="left:1933.0px;top:1040.4px;width:5.0px;height:49.2px;background:#0000ff;"></div>
<div style="left:2023.0px;top:1040.4px;width:5.0px;height:49.2px;background:#0000ff;"></div>
<div style="left:2113.0px;top:1040.4px;width:5.0px;height:49.2px;background:#0000ff;"></div>
<div style="left:2203.0px;top:1040.4px;width:5.0px;height:49.2px;background:#0000ff;"></div>
<div style="left:2208.0px;top:1040.4px;width:90.0px;height:52.4px;background:#bccad8;"></div>
<div style="left:2293.0px;top:1040.4px;width:5.0px;height:49.2px;background:#0000ff;"></div>
<div style="left:2383.0px;top:1040.4px;width:5.0px;height:49.2px;background:#0000ff;"></div>
<div style="left:2473.0px;top:1040.4px;width:5.0px;height:49.2px;background:#0000ff;"></div>
<div style="left:2563.0px;top:1040.4px;width:5.0px;height:49.2px;background:#0000ff;"></div>
<div style="left:2568.0px;top:1040.4px;width:90.0px;height:52.4px;background:#bccad8;"></div>
<div style="left:2653.0px;top:1040.4px;width:5.0px;height:49.2px;background:#0000ff;"></div>
<div style="left:2743.0px;top:1040.4px;width:5.0px;height:49.2px;background:#0000ff;"></div>
<div style="left:2833.0px;top:1040.4px;width:5.0px;height:49.2px;background:#0000ff;"></div>
<div style="left:2923.0px;top:1040.4px;width:5.0px;height:49.2px;background:#0000ff;"></div>
<div style="left:2928.0px;top:1040.4px;width:90.0px;height:52.4px;background:#bccad8;"></div>
<div style="left:3013.0px;top:1040.4px;width:5.0px;height:49.2px;background:#0000ff;"></div>
<div style="left:3103.0px;top:1040.4px;width:5.0px;height:49.2px;background:#0000ff;"></div>
<div style="left:3193.0px;top:1040.4px;width:5.0px;height:49.2px;background:#0000ff;"></div>
<div style="left:3283.0px;top:1040.4px;width:5.0px;height:49.2px;background:#0000ff;"></div>
<div style="left:1848.0px;top:1092.8px;width:90.0px;height:52.4px;background:#bccad8;"></div>
<div style="left:1933.0px;top:1092.8px;width:5.0px;height:49.2px;background:#0000ff;"></div>
<div style="left:2023.0px;top:1092.8px;width:5.0px;height:49.2px;background:#0000ff;"></div>
<div style="left:2113.0px;top:1092.8px;width:5.0px;height:49.2px;background:#0000ff;"></div>
<div style="left:2203.0px;top:1092.8px;width:5.0px;height:49.2px;background:#0000ff;"></div>
<div style="left:2208.0px;top:1092.8px;width:90.0px;height:52.4px;background:#bccad8;"></div>
<div style="left:2293.0px;top:1092.8px;width:5.0px;height:49.2px;background:#0000ff;"></div>
<div style="left:2383.0px;top:1092.8px;width:5.0px;height:49.2px;background:#0000ff;"></div>
<div style="left:2388.0px;top:1092.8px;width:90.0px;height:52.4px;background:#bccad8;"></div>
<div style="left:2473.0px;top:1092.8px;width:5.0px;height:49.2px;background:#0000ff;"></div>
<div style="left:2478.0px;top:1092.8px;width:90.0px;height:52.4px;background:#bccad8;"></div>
<div style="left:2563.0px;top:1092.8px;width:5.0px;height:49.2px;background:#0000ff;"></div>
<div style="left:2568.0px;top:1092.8px;width:90.0px;height:52.4px;background:#bccad8;"></div>
<div style="left:2653.0px;top:1092.8px;width:5.0px;height:49.2px;background:#0000ff;"></div>
<div style="left:2743.0px;top:1092.8px;width:5.0px;height:49.2px;background:#0000ff;"></div>
<div style="left:2748.0px;top:1092.8px;width:90.0px;height:52.4px;background:#bccad8;"></div>
<div style="left:2833.0px;top:1092.8px;width:5.0px;height:49.2px;background:#0000ff;"></div>
<div style="left:2838.0px;top:1092.8px;width:90.0px;height:52.4px;background:#bccad8;"></div>
<div style="left:2923.0px;top:1092.8px;width:5.0px;height:49.2px;background:#0000ff;"></div>
<div style="left:2928.0px;top:1092.8px;width:90.0px;height:52.4px;background:#bccad8;"></div>
<div style="left:3013.0px;top:1092.8px;width:5.0px;height:49.2px;background:#0000ff;"></div>
<div style="left:3103.0px;top:1092.8px;width:5.0px;height:49.2px;background:#0000ff;"></div>
<div style="left:3108.0px;top:1092.8px;width:90.0px;height:52.4px;background:#bccad8;"></div>
<div style="left:3193.0px;top:1092.8px;width:5.0px;height:49.2px;background:#0000ff;"></div>
<div style="left:3198.0px;top:1092.8px;width:90.0px;height:52.4px;background:#bccad8;"></div>
<div style="left:3283.0px;top:1092.8px;width:5.0px;height:49.2px;background:#0000ff;"></div>
<div style="left:1848.0px;top:1145.2px;width:90.0px;height:52.4px;background:#bccad8;"></div>
<div style="left:1933.0px;top:1145.2px;width:5.0px;height:49.2px;background:#0000ff;"></div>
<div style="left:1938.0px;top:1145.2px;width:90.0px;height:52.4px;background:#bccad8;"></div>
<div style="left:2023.0px;top:1145.2px;width:5.0px;height:49.2px;background:#0000ff;"></div>
<div style="left:2113.0px;top:1145.2px;width:5.0px;height:49.2px;background:#0000ff;"></div>
<div style="left:2118.0px;top:1145.2px;width:90.0px;height:52.4px;background:#bccad8;"></div>
<div style="left:2203.0px;top:1145.2px;width:5.0px;height:49.2px;background:#0000ff;"></div>
<div style="left:2208.0px;top:1145.2px;width:90.0px;height:52.4px;background:#bccad8;"></div>
<div style="left:2293.0px;top:1145.2px;width:5.0px;height:49.2px;background:#0000ff;"></div>
<div style="left:2298.0px;top:1145.2px;width:90.0px;height:52.4px;background:#bccad8;"></div>
<div style="left:2383.0px;top:1145.2px;width:5.0px;height:49.2px;background:#0000ff;"></div>
<div style="left:2388.0px;top:1145.2px;width:90.0px;height:52.4px;background:#bccad8;"></div>
<div style="left:2473.0px;top:1145.2px;width:5.0px;height:49.2px;background:#0000ff;"></div>
<div style="left:2478.0px;top:1145.2px;width:90.0px;height:52.4px;background:#bccad8;"></div>
<div style="left:2563.0px;top:1145.2px;width:5.0px;height:49.2px;background:#0000ff;"></div>
<div style="left:2653.0px;top:1145.2px;width:5.0px;height:49.2px;background:#0000ff;"></div>
<div style="left:2658.0px;top:1145.2px;width:90.0px;height:52.4px;background:#bccad8;"></div>
<div style="left:2743.0px;top:1145.2px;width:5.0px;height:49.2px;background:#0000ff;"></div>
<div style="left:2748.0px;top:1145.2px;width:90.0px;height:52.4px;background:#bccad8;"></div>
<div style="left:2833.0px;top:1145.2px;width:5.0px;height:49.2px;background:#0000ff;"></div>
<div style="left:2838.0px;top:1145.2px;width:90.0px;height:52.4px;background:#bccad8;"></div>
<div style="left:2923.0px;top:1145.2px;width:5.0px;height:49.2px;background:#0000ff;"></div>
<span class="t" style="left:1863.0px;top:885.8px;font-size:36px;color:#000;transform:scaleX(0.874);">097</span>
<span class="t" style="left:1953.0px;top:885.8px;font-size:36px;color:#000;transform:scaleX(0.874);">116</span>
<span class="t" style="left:2043.0px;top:885.8px;font-size:36px;color:#000;transform:scaleX(0.874);">043</span>
<span class="t" style="left:2133.0px;top:885.8px;font-size:36px;color:#000;transform:scaleX(0.874);">114</span>
<span class="t" style="left:2223.0px;top:885.8px;font-size:36px;color:#000;transform:scaleX(0.874);">115</span>
<span class="t" style="left:2313.0px;top:885.8px;font-size:36px;color:#000;transform:scaleX(0.874);">105</span>
<span class="t" style="left:2403.0px;top:885.8px;font-size:36px;color:#000;transform:scaleX(0.874);">095</span>
<span class="t" style="left:2493.0px;top:885.8px;font-size:36px;color:#000;transform:scaleX(0.874);">103</span>
<span class="t" style="left:2583.0px;top:885.8px;font-size:36px;color:#000;transform:scaleX(0.874);">097</span>
<span class="t" style="left:2673.0px;top:885.8px;font-size:36px;color:#000;transform:scaleX(0.874);">105</span>
<span class="t" style="left:2763.0px;top:885.8px;font-size:36px;color:#000;transform:scaleX(0.874);">110</span>
<span class="t" style="left:2853.0px;top:885.8px;font-size:36px;color:#000;transform:scaleX(0.874);">095</span>
<span class="t" style="left:2943.0px;top:885.8px;font-size:36px;color:#000;transform:scaleX(0.874);">116</span>
<span class="t" style="left:3033.0px;top:885.8px;font-size:36px;color:#000;transform:scaleX(0.874);">097</span>
<span class="t" style="left:3123.0px;top:885.8px;font-size:36px;color:#000;transform:scaleX(0.874);">098</span>
<span class="t" style="left:3213.0px;top:885.8px;font-size:36px;color:#000;transform:scaleX(0.874);">108</span>
<span class="t" style="left:1863.0px;top:938.2px;font-size:36px;color:#000;transform:scaleX(0.874);">101</span>
<span class="t" style="left:1953.0px;top:938.2px;font-size:36px;color:#000;transform:scaleX(0.874);">061</span>
<span class="t" style="left:2043.0px;top:938.2px;font-size:36px;color:#000;transform:scaleX(0.874);">049</span>
<span class="t" style="left:2133.0px;top:938.2px;font-size:36px;color:#000;transform:scaleX(0.874);">044</span>
<span class="t" style="left:2223.0px;top:938.2px;font-size:36px;color:#000;transform:scaleX(0.874);">048</span>
<span class="t" style="left:2313.0px;top:938.2px;font-size:36px;color:#000;transform:scaleX(0.874);">044</span>
<span class="t" style="left:2403.0px;top:938.2px;font-size:36px;color:#000;transform:scaleX(0.874);">054</span>
<span class="t" style="left:2493.0px;top:938.2px;font-size:36px;color:#000;transform:scaleX(0.874);">055</span>
<span class="t" style="left:2583.0px;top:938.2px;font-size:36px;color:#000;transform:scaleX(0.874);">044</span>
<span class="t" style="left:2673.0px;top:938.2px;font-size:36px;color:#000;transform:scaleX(0.874);">003</span>
<span class="t" style="left:2763.0px;top:938.2px;font-size:36px;color:#000;transform:scaleX(0.874);">000</span>
<span class="t" style="left:2853.0px;top:938.2px;font-size:36px;color:#000;transform:scaleX(0.874);">013</span>
<span class="t" style="left:2943.0px;top:938.2px;font-size:36px;color:#000;transform:scaleX(0.874);">001</span>
<span class="t" style="left:3033.0px;top:938.2px;font-size:36px;color:#000;transform:scaleX(0.874);">034</span>
<span class="t" style="left:3123.0px;top:938.2px;font-size:36px;color:#000;transform:scaleX(0.874);">020</span>
<span class="t" style="left:3213.0px;top:938.2px;font-size:36px;color:#000;transform:scaleX(0.874);">020</span>
<span class="t" style="left:1863.0px;top:990.6px;font-size:36px;color:#000;transform:scaleX(0.874);">002</span>
<span class="t" style="left:1953.0px;top:990.6px;font-size:36px;color:#000;transform:scaleX(0.874);">034</span>
<span class="t" style="left:2043.0px;top:990.6px;font-size:36px;color:#000;transform:scaleX(0.874);">028</span>
<span class="t" style="left:2133.0px;top:990.6px;font-size:36px;color:#000;transform:scaleX(0.874);">028</span>
<span class="t" style="left:2223.0px;top:990.6px;font-size:36px;color:#000;transform:scaleX(0.874);">003</span>
<span class="t" style="left:2313.0px;top:990.6px;font-size:36px;color:#000;transform:scaleX(0.874);">034</span>
<span class="t" style="left:2403.0px;top:990.6px;font-size:36px;color:#000;transform:scaleX(0.874);">032</span>
<span class="t" style="left:2493.0px;top:990.6px;font-size:36px;color:#000;transform:scaleX(0.874);">032</span>
<span class="t" style="left:2583.0px;top:990.6px;font-size:36px;color:#000;transform:scaleX(0.874);">004</span>
<span class="t" style="left:2673.0px;top:990.6px;font-size:36px;color:#000;transform:scaleX(0.874);">034</span>
<span class="t" style="left:2763.0px;top:990.6px;font-size:36px;color:#000;transform:scaleX(0.874);">036</span>
<span class="t" style="left:2853.0px;top:990.6px;font-size:36px;color:#000;transform:scaleX(0.874);">036</span>
<span class="t" style="left:2943.0px;top:990.6px;font-size:36px;color:#000;transform:scaleX(0.874);">005</span>
<span class="t" style="left:3033.0px;top:990.6px;font-size:36px;color:#000;transform:scaleX(0.874);">034</span>
<span class="t" style="left:3123.0px;top:990.6px;font-size:36px;color:#000;transform:scaleX(0.874);">038</span>
<span class="t" style="left:3213.0px;top:990.6px;font-size:36px;color:#000;transform:scaleX(0.874);">038</span>
<span class="t" style="left:1863.0px;top:1043.0px;font-size:36px;color:#000;transform:scaleX(0.874);">006</span>
<span class="t" style="left:1953.0px;top:1043.0px;font-size:36px;color:#000;transform:scaleX(0.874);">034</span>
<span class="t" style="left:2043.0px;top:1043.0px;font-size:36px;color:#000;transform:scaleX(0.874);">040</span>
<span class="t" style="left:2133.0px;top:1043.0px;font-size:36px;color:#000;transform:scaleX(0.874);">040</span>
<span class="t" style="left:2223.0px;top:1043.0px;font-size:36px;color:#000;transform:scaleX(0.874);">007</span>
<span class="t" style="left:2313.0px;top:1043.0px;font-size:36px;color:#000;transform:scaleX(0.874);">034</span>
<span class="t" style="left:2403.0px;top:1043.0px;font-size:36px;color:#000;transform:scaleX(0.874);">038</span>
<span class="t" style="left:2493.0px;top:1043.0px;font-size:36px;color:#000;transform:scaleX(0.874);">038</span>
<span class="t" style="left:2583.0px;top:1043.0px;font-size:36px;color:#000;transform:scaleX(0.874);">008</span>
<span class="t" style="left:2673.0px;top:1043.0px;font-size:36px;color:#000;transform:scaleX(0.874);">034</span>
<span class="t" style="left:2763.0px;top:1043.0px;font-size:36px;color:#000;transform:scaleX(0.874);">036</span>
<span class="t" style="left:2853.0px;top:1043.0px;font-size:36px;color:#000;transform:scaleX(0.874);">036</span>
<span class="t" style="left:2943.0px;top:1043.0px;font-size:36px;color:#000;transform:scaleX(0.874);">009</span>
<span class="t" style="left:3033.0px;top:1043.0px;font-size:36px;color:#000;transform:scaleX(0.874);">034</span>
<span class="t" style="left:3123.0px;top:1043.0px;font-size:36px;color:#000;transform:scaleX(0.874);">032</span>
<span class="t" style="left:3213.0px;top:1043.0px;font-size:36px;color:#000;transform:scaleX(0.874);">032</span>
<span class="t" style="left:1863.0px;top:1095.4px;font-size:36px;color:#000;transform:scaleX(0.874);">010</span>
<span class="t" style="left:1953.0px;top:1095.4px;font-size:36px;color:#000;transform:scaleX(0.874);">034</span>
<span class="t" style="left:2043.0px;top:1095.4px;font-size:36px;color:#000;transform:scaleX(0.874);">032</span>
<span class="t" style="left:2133.0px;top:1095.4px;font-size:36px;color:#000;transform:scaleX(0.874);">032</span>
<span class="t" style="left:2223.0px;top:1095.4px;font-size:36px;color:#000;transform:scaleX(0.874);">011</span>
<span class="t" style="left:2313.0px;top:1095.4px;font-size:36px;color:#000;transform:scaleX(0.874);">034</span>
<span class="t" style="left:2403.0px;top:1095.4px;font-size:36px;color:#000;transform:scaleX(0.874);">024</span>
<span class="t" style="left:2493.0px;top:1095.4px;font-size:36px;color:#000;transform:scaleX(0.874);">024</span>
<span class="t" style="left:2583.0px;top:1095.4px;font-size:36px;color:#000;transform:scaleX(0.874);">012</span>
<span class="t" style="left:2673.0px;top:1095.4px;font-size:36px;color:#000;transform:scaleX(0.874);">034</span>
<span class="t" style="left:2763.0px;top:1095.4px;font-size:36px;color:#000;transform:scaleX(0.874);">016</span>
<span class="t" style="left:2853.0px;top:1095.4px;font-size:36px;color:#000;transform:scaleX(0.874);">024</span>
<span class="t" style="left:2943.0px;top:1095.4px;font-size:36px;color:#000;transform:scaleX(0.874);">013</span>
<span class="t" style="left:3033.0px;top:1095.4px;font-size:36px;color:#000;transform:scaleX(0.874);">034</span>
<span class="t" style="left:3123.0px;top:1095.4px;font-size:36px;color:#000;transform:scaleX(0.874);">012</span>
<span class="t" style="left:3213.0px;top:1095.4px;font-size:36px;color:#000;transform:scaleX(0.874);">012</span>
<span class="t" style="left:1863.0px;top:1147.8px;font-size:36px;color:#000;transform:scaleX(0.874);">002</span>
<span class="t" style="left:1953.0px;top:1147.8px;font-size:36px;color:#000;transform:scaleX(0.874);">017</span>
<span class="t" style="left:2043.0px;top:1147.8px;font-size:36px;color:#000;transform:scaleX(0.874);">255</span>
<span class="t" style="left:2133.0px;top:1147.8px;font-size:36px;color:#000;transform:scaleX(0.874);">020</span>
<span class="t" style="left:2223.0px;top:1147.8px;font-size:36px;color:#000;transform:scaleX(0.874);">016</span>
<span class="t" style="left:2313.0px;top:1147.8px;font-size:36px;color:#000;transform:scaleX(0.874);">016</span>
<span class="t" style="left:2403.0px;top:1147.8px;font-size:36px;color:#000;transform:scaleX(0.874);">004</span>
<span class="t" style="left:2493.0px;top:1147.8px;font-size:36px;color:#000;transform:scaleX(0.874);">017</span>
<span class="t" style="left:2583.0px;top:1147.8px;font-size:36px;color:#000;transform:scaleX(0.874);">255</span>
<span class="t" style="left:2673.0px;top:1147.8px;font-size:36px;color:#000;transform:scaleX(0.874);">026</span>
<span class="t" style="left:2763.0px;top:1147.8px;font-size:36px;color:#000;transform:scaleX(0.874);">020</span>
<span class="t" style="left:2853.0px;top:1147.8px;font-size:36px;color:#000;transform:scaleX(0.874);">020</span>
<div style="left:2928.0px;top:1145.2px;width:85.0px;height:52.4px;background:#f0f0f0;"></div>
<div style="left:2970.0px;top:1146.7px;width:2.5px;height:39.5px;background:#000;"></div>
<div style="left:1843.0px;top:1238.0px;width:1520.0px;height:3.0px;background:#1c1c1c;"></div>
<span class="t" style="left:1844.5px;top:1260.2px;font-size:31px;color:#000;transform:scale(0.8376,1.0000);">3 - Additional</span>
<span class="t" style="left:1844.5px;top:1292.4px;font-size:31px;color:#000;transform:scale(0.8347,1.0000);">Settings</span>
<div style="left:2064.0px;top:1310.0px;width:1303.0px;height:270.0px;border-style:solid;border-width:3px;border-color:#fff #696969 #696969 #fff;box-shadow:inset -2.5px -2.5px 0 0 #a0a0a0;"></div>
<div style="left:2065.0px;top:1260.0px;width:126.0px;height:54.0px;background:#f0f0f0;border-style:solid;border-width:3px 3px 0 3px;border-color:#fff #696969 #fff #fff;border-radius:5px 5px 0 0;box-shadow:inset -2.5px 0 0 0 #a0a0a0;"></div>
<span class="t" style="left:2083.6px;top:1267.8px;font-size:31px;color:#000;transform:scale(0.8737,1.0000);">Repeat</span>
<div style="left:2082.8px;top:1364.0px;width:31.2px;height:29.5px;border-style:solid;border-width:2px 3px 3px 2px;border-color:#a0a0a0 #fff #fff #a0a0a0;"></div>
<div style="left:2084.8px;top:1366.0px;width:26.2px;height:24.5px;background:#fff;border-style:solid;border-width:3px 2px 2px 3px;border-color:#696969 #e3e3e3 #e3e3e3 #696969;"></div>
<span class="t" style="left:2129.0px;top:1362.7px;font-size:31px;color:#000;transform:scale(0.8570,1.0000);">Send periodically  (if not sent as an automatic answer to a receive sequence)</span>
<span class="t" style="left:2123.5px;top:1439.8px;font-size:31px;color:#7d7d7d;transform:scale(0.8688,1.0000);">Repeat sequence every</span>
<div style="left:2462.4px;top:1430.7px;width:101.3px;height:44.3px;border-style:solid;border-width:2px 3px 3px 2px;border-color:#a0a0a0 #fff #fff #a0a0a0;"></div>
<div style="left:2464.4px;top:1432.7px;width:96.3px;height:39.3px;background:#fff;border-style:solid;border-width:3px 2px 2px 3px;border-color:#696969 #e3e3e3 #e3e3e3 #696969;"></div>
<span class="t" style="left:2471.5px;top:1438.8px;font-size:31px;color:#7d7d7d;transform:scale(0.7847,1.0000);">5</span>
<span class="t" style="left:2604.4px;top:1439.8px;font-size:31px;color:#7d7d7d;transform:scale(0.8609,1.0000);">seconds</span>
<div class="btn" style="left:1823.5px;top:1619.5px;width:371.0px;height:60.0px;"></div>
<span class="t" style="left:1907.0px;top:1632.1px;font-size:31px;color:#000;transform:scale(0.8662,1.0000);">Delete Sequence</span>
<div style="left:2522.8px;top:1619.5px;width:201.9px;height:60.0px;border:2.5px solid #4a4a4a;"></div>
<div class="btn" style="left:2525.3px;top:1622.0px;width:196.9px;height:55.0px;"></div>
<span class="t" style="left:2607.0px;top:1632.1px;font-size:31px;color:#000;transform:scale(0.8049,1.0000);">OK</span>
<div class="btn" style="left:2743.0px;top:1619.5px;width:202.0px;height:60.0px;"></div>
<span class="t" style="left:2804.0px;top:1632.1px;font-size:31px;color:#000;transform:scale(0.8503,1.0000);">Cancel</span>
<div class="btn" style="left:2963.0px;top:1619.5px;width:202.0px;height:60.0px;"></div>
<span class="t" style="left:3030.0px;top:1632.1px;font-size:31px;color:#000;transform:scale(0.8511,1.0000);">Apply</span>
<div class="btn" style="left:3183.0px;top:1619.5px;width:202.0px;height:60.0px;"></div>
<span class="t" style="left:3256.5px;top:1632.1px;font-size:31px;color:#000;transform:scale(0.8553,1.0000);">Help</span>
</body></html>
